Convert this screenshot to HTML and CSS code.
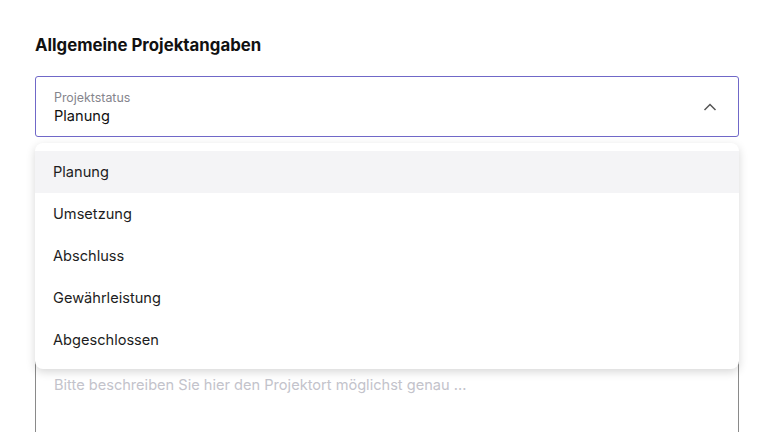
FILE: index.html
```html
<!DOCTYPE html>
<html lang="de">
<head>
    <meta charset="UTF-8">
    <meta name="viewport" content="width=device-width, initial-scale=1.0">
    <title>Projektangaben</title>
    <link rel="stylesheet" href="styles.css">
</head>
<body>
    <div class="section">
        <h2>Allgemeine Projektangaben</h2>

        <div class="select-wrap">
            <div class="select open">
                <div class="select-text">
                    <span class="select-label">Projektstatus</span>
                    <span class="select-value">Planung</span>
                </div>
                <svg class="chevron" width="16" height="10" viewBox="0 0 16 10">
                    <path d="M2.5 8 L8 2.5 L13.5 8" fill="none" stroke="#555" stroke-width="1.5"/>
                </svg>
            </div>
            <ul class="dropdown">
                <li class="active">Planung</li>
                <li>Umsetzung</li>
                <li>Abschluss</li>
                <li>Gewährleistung</li>
                <li>Abgeschlossen</li>
            </ul>
        </div>

        <div class="textarea-field">
            <textarea placeholder="Bitte beschreiben Sie hier den Projektort möglichst genau ..."></textarea>
        </div>
    </div>
</body>
</html>
```

FILE: styles.css
```css
html, body {
    height: 432px;
}
body {
    margin: 0;
    font-family: Inter, "Noto Sans", sans-serif;
    background-color: white;
    color: #1d1d22;
    overflow: hidden;
}
.section {
    padding: 34px 34px 0 35px;
}
h2 {
    font-size: 16.8px;
    font-weight: 700;
    margin: 0 0 20px 0;
    line-height: 22px;
    color: #111;
}
.select-wrap {
    position: relative;
}
.select {
    height: 61px;
    box-sizing: border-box;
    border: 1px solid #7068c8;
    border-radius: 3px;
    display: flex;
    align-items: center;
    justify-content: space-between;
    padding: 0 20px 0 18px;
}
.select-text {
    display: flex;
    flex-direction: column;
    padding-top: 2px;
}
.select-label {
    font-size: 12.4px;
    color: #85858d;
    line-height: 16px;
}
.select-value {
    font-size: 14.6px;
    line-height: 20px;
    color: #111;
}
.chevron {
    margin-top: 1px;
}
.dropdown {
    position: absolute;
    top: 67px;
    left: 0;
    right: 0;
    margin: 0;
    padding: 8px 0;
    list-style: none;
    background-color: white;
    border-radius: 8px;
    box-shadow: 0 3px 10px rgba(0, 0, 0, 0.16);
    z-index: 2;
}
.dropdown li {
    height: 42px;
    line-height: 42px;
    padding: 0 18px;
    font-size: 14.6px;
    color: #1d1d22;
}
.dropdown li.active {
    background-color: #f4f4f6;
}
.textarea-field {
    margin-top: 221px;
}
.textarea-field textarea {
    display: block;
    width: 100%;
    height: 74px;
    box-sizing: border-box;
    border: 1px solid #8a8a8a;
    border-bottom: none;
    border-radius: 3px 3px 0 0;
    padding: 17px 18px;
    font-family: inherit;
    font-size: 14.6px;
    line-height: 18px;
    resize: none;
}
.textarea-field textarea::placeholder {
    color: #c3c3cb;
}
```
